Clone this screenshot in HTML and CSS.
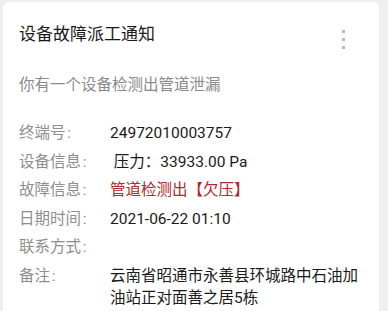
FILE: index.html
```html
<!DOCTYPE html>
<html lang="zh-CN">
<head>
    <meta charset="UTF-8">
    <meta name="viewport" content="width=device-width, initial-scale=1.0">
    <title>设备故障派工通知</title>
    <link rel="stylesheet" href="styles.css">
</head>
<body>
    <!-- 通知卡片 -->
    <div class="card">
        <div class="card-head">
            <h1>设备故障派工通知</h1>
            <div class="more">
                <span></span><span></span><span></span>
            </div>
        </div>
        <p class="summary">你有一个设备检测出管道泄漏</p>

        <!-- 详情列表 -->
        <div class="detail">
            <div class="row">
                <div class="label">终端号 :</div>
                <div class="value">24972010003757</div>
            </div>
            <div class="row">
                <div class="label">设备信息 :</div>
                <div class="value">&nbsp;压力：33933.00 Pa</div>
            </div>
            <div class="row">
                <div class="label">故障信息 :</div>
                <div class="value warn">管道检测出【欠压】</div>
            </div>
            <div class="row">
                <div class="label">日期时间 :</div>
                <div class="value">2021-06-22 01:10</div>
            </div>
            <div class="row">
                <div class="label">联系方式 :</div>
                <div class="value"></div>
            </div>
            <div class="row">
                <div class="label">备注 :</div>
                <div class="value">云南省昭通市永善县环城路中石油加油站正对面善之居5栋</div>
            </div>
        </div>
    </div>
</body>
</html>
```

FILE: styles.css
```css
/* 全局样式 */
* {
    margin: 0;
    padding: 0;
    box-sizing: border-box;
}

html, body {
    height: 100%;
    overflow: hidden;
}

body {
    font-family: Roboto, "Noto Sans CJK SC", sans-serif;
    color: #1f1f1f;
    background-color: #efefef;
    padding: 2px 9px 0 3px;
}

/* 卡片 */
.card {
    background: #fff;
    border-radius: 6px 6px 0 0;
    padding: 20px 19px 0 16px;
    height: 100%;
}

.card-head {
    display: flex;
    align-items: flex-start;
    justify-content: space-between;
}

.card-head h1 {
    font-size: 17px;
    font-weight: normal;
    line-height: 24px;
    color: #1a1a1a;
}

.more {
    display: flex;
    flex-direction: column;
    gap: 5px;
    margin: 8px 15px 0 0;
}

.more span {
    width: 3px;
    height: 3px;
    background: #b8b8b8;
}

.summary {
    font-size: 15.5px;
    line-height: 22px;
    color: #8a8a8a;
    margin-top: 25px;
}

/* 详情列表 */
.detail {
    margin-top: 26px;
    display: flex;
    flex-direction: column;
    gap: 6.5px;
}

.row {
    display: grid;
    grid-template-columns: 91px 1fr;
    font-size: 15.5px;
    line-height: 22px;
}

.label {
    color: #8e8e8e;
    word-spacing: -2px;
}

.value {
    color: #1a1a1a;
    min-height: 22px;
}

.value.warn {
    color: #ae2a2c;
}
```
